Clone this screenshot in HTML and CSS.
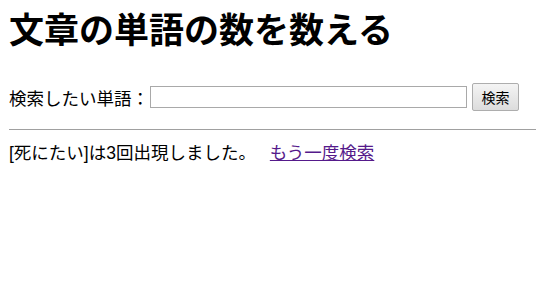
FILE: index.html
```html
<!DOCTYPE html>
<html lang="ja">
<head>
    <meta charset="UTF-8">
    <title>文章の単語の数を数える</title>
    <link rel="stylesheet" href="styles.css">
</head>
<body>
    <h1 class="title">文章の単語の数を数える</h1>
    <form class="search-form">
        <label for="word" class="word-label">検索したい単語：</label>
        <input type="text" id="word" class="word-input">
        <button type="submit" class="search-button">検索</button>
    </form>
    <hr class="divider">
    <p class="result">[死にたい]は3回出現しました。 <a href="#" class="again-link">もう一度検索</a></p>
</body>
</html>
```

FILE: styles.css
```css
body {
    font-family: "Liberation Sans", "Noto Sans CJK JP", sans-serif;
    font-size: 17.5px;
    margin: 0 1px 0 9px;
    color: #000;
    background-color: #fff;
}
.title {
    font-size: 35px;
    font-weight: bold;
    margin: 11px 0 32px;
    line-height: 40px;
}
.search-form {
    display: flex;
    align-items: center;
    height: 28px;
    margin: 0;
}
.word-label {
    width: 141px;
    white-space: nowrap;
}
.word-input {
    box-sizing: border-box;
    width: 317px;
    height: 22px;
    padding: 1px 3px;
    border: 1px solid #a9a9a9;
    margin: 0 5px 0 0;
    font-size: 15px;
}
.search-button {
    box-sizing: border-box;
    font-family: "Liberation Sans", "Noto Sans CJK JP", sans-serif;
    font-size: 14px;
    width: 47px;
    height: 28px;
    padding: 0;
    border: 1px solid #adadad;
    border-radius: 2px;
    background: linear-gradient(#f4f4f4, #dcdcdc);
    color: #000;
}
.divider {
    margin: 18px 0 0;
    border: none;
    border-top: 1px solid #a0a0a0;
}
.result {
    margin: 11px 0 0;
    line-height: 24px;
}
.again-link {
    color: #551a8b;
    margin-left: 9px;
}
```
